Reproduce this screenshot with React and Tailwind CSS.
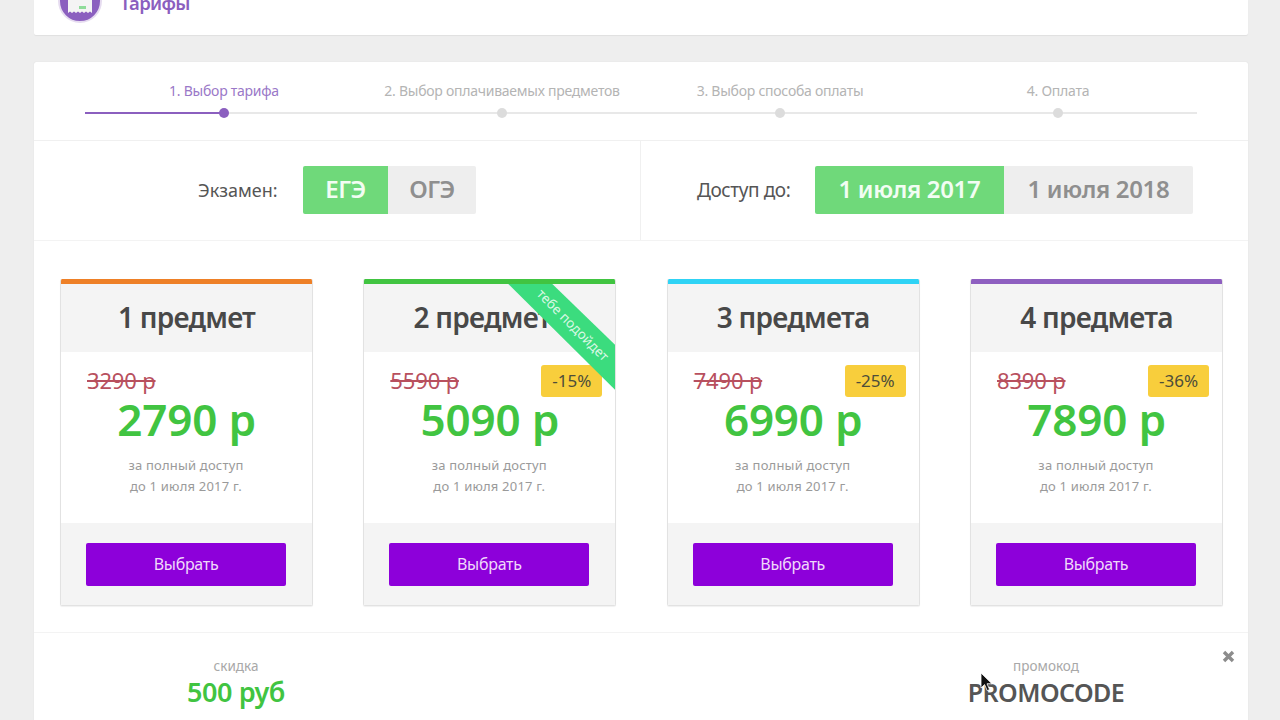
const F = { fontFamily: '"Noto Sans", sans-serif' };

const plans = [
  { n: '1 предмет', old: '3290 р', price: '2790 р', bar: 'bg-[#ee8027]' },
  { n: '2 предмета', old: '5590 р', price: '5090 р', bar: 'bg-[#41c441]', off: '-15%', ribbon: true },
  { n: '3 предмета', old: '7490 р', price: '6990 р', bar: 'bg-[#2fd3f5]', off: '-25%' },
  { n: '4 предмета', old: '8390 р', price: '7890 р', bar: 'bg-[#8e5fc0]', off: '-36%' },
];
const steps = ['1. Выбор тарифа', '2. Выбор оплачиваемых предметов', '3. Выбор способа оплаты', '4. Оплата'];

function Plan({ p }) {
  return (
    <div className="relative w-[253px] h-[327px] flex flex-col rounded-[2px] border-x border-b border-[#e2e2e2] shadow-[0_1px_1px_rgba(0,0,0,0.06)] overflow-hidden">
      <div className={`h-[5px] -mx-px shrink-0 ${p.bar}`} />
      <div className="h-[68px] shrink-0 bg-[#f4f4f4] flex items-center justify-center pb-[2px] text-[28px] font-semibold text-[#484848] tracking-[-0.75px]">{p.n}</div>
      <div className="h-[171px] shrink-0 bg-white pl-[26px] pr-[25px] relative">
        <div className="h-[57px] flex items-start justify-between pt-[12px]">
          <span className="text-[#b8505e] text-[22px] leading-[32px] line-through tracking-[-0.15px]">{p.old}</span>
          {p.off && <span className="w-[61px] h-[32px] mt-[1px] mr-[-12px] rounded-[3px] bg-[#f8ce3c] text-[#4d4d3a] text-[17px] flex items-center justify-center">{p.off}</span>}
        </div>
        <div className="-ml-px text-center text-[#41c441] text-[44px] leading-[50px] font-semibold tracking-[-0.2px] mt-[-15px]">{p.price}</div>
        <div className="-ml-[2px] mt-[11px] text-center text-[#9a9a9a] text-[13px] leading-[21px] tracking-[0.2px]">за полный доступ<br />до 1 июля 2017 г.</div>
      </div>
      <div className="flex-1 bg-[#f4f4f4] pt-[20px] pl-[25px] flex justify-start">
        <button className="w-[200px] h-[43px] pb-[2px] rounded-[2px] bg-[#8d00da] text-[#f0d8fa] text-[16px] tracking-[-0.3px]">Выбрать</button>
      </div>
      {p.ribbon && (
        <div className="absolute top-[5px] right-0 w-[107px] h-[106px] bg-[#3bdc7e] [clip-path:polygon(0_0,44px_0,100%_61px,100%_100%)]">
          <span className="absolute left-[65px] top-[41px] -translate-x-1/2 -translate-y-1/2 rotate-45 whitespace-nowrap text-[13.5px] text-[#d9f8e4]">тебе подойдет</span>
        </div>
      )}
    </div>
  );
}

export default function App() {
  return (
    <div style={F} className="w-[1280px] h-[720px] overflow-hidden bg-[#eeeeee]">
      <div className="ml-[34px] w-[1214px] h-[35px] bg-white shadow-[0_1px_1px_rgba(0,0,0,0.06)] rounded-b-[2px] overflow-hidden flex items-end pl-[24px] pb-[12px] gap-[18px]">
        <div className="w-[44px] h-[44px] shrink-0 rounded-full bg-[#8b5fbf] border-2 border-[#e6dcf0] flex items-start justify-center overflow-hidden">
          <svg width="26" height="36" viewBox="0 0 26 34" className="mt-[1px]">
            <path d="M1 0h24v30l-2-1.5-2 1.5-2-1.5-2 1.5-2-1.5-2 1.5-2-1.5-2 1.5-2-1.5-2 1.5-2-1.5-2 1.5z" fill="#f4f4f4" />
            <rect x="12" y="23" width="7" height="3" fill="#8fdc9a" />
          </svg>
        </div>
        <div className="text-[#8b5fbf] text-[18.5px] leading-[24px] font-semibold mb-[8px] tracking-[-0.7px]">Тарифы</div>
      </div>

      <div className="ml-[34px] w-[1214px] mt-[27px] h-[700px] bg-white shadow-[0_0_1px_rgba(0,0,0,0.15)] rounded-t-[2px]">
        <div className="h-[79px] border-b border-[#f0f0f0] px-[51px] grid grid-cols-4 relative">
          {steps.map((s, i) => (
            <div key={s} className="relative flex flex-col items-center pt-[20px]">
              <span className={`text-[14px] leading-[18px] whitespace-nowrap tracking-[-0.25px] ${i === 0 ? 'text-[#9a78c8]' : 'text-[#b4b4b4]'}`}>{s}</span>
              <div className={`absolute left-0 right-0 top-[50px] h-[2px] ${i === 0 ? 'bg-[linear-gradient(90deg,#8b5fbf_50%,#e8e8e8_50%)]' : 'bg-[#e8e8e8]'}`} />
              <div className={`absolute top-[46px] w-[10px] h-[10px] rounded-full ${i === 0 ? 'bg-[#8b5fbf]' : 'bg-[#dcdcdc]'}`} />
            </div>
          ))}
        </div>

        <div className="h-[100px] border-b border-[#f3f3f3] flex">
          <div className="w-[607px] border-r border-[#f0f0f0] flex items-center pl-[164px] pb-[1px]">
            <span className="w-[105px] text-[18px] text-[#555]">Экзамен:</span>
            <div className="flex h-[48px] text-[24px] font-semibold">
              <div className="w-[85px] pb-[2px] rounded-l-[2px] bg-[#6fd97a] text-[#f2fdf3] flex items-center justify-center tracking-[-0.6px]">ЕГЭ</div>
              <div className="w-[88px] pb-[2px] rounded-r-[2px] bg-[#eeeeee] text-[#8f8f8f] flex items-center justify-center tracking-[-0.6px]">ОГЭ</div>
            </div>
          </div>
          <div className="flex-1 flex items-center pl-[56px] pb-[1px]">
            <span className="w-[118px] text-[19px] text-[#555] tracking-[-0.4px]">Доступ до:</span>
            <div className="flex h-[48px] text-[24px] font-semibold tracking-[-0.35px]">
              <div className="w-[189px] pb-[2px] rounded-l-[2px] bg-[#6fd97a] text-[#f2fdf3] flex items-center justify-center">1 июля 2017</div>
              <div className="w-[189px] pb-[2px] rounded-r-[2px] bg-[#eeeeee] text-[#8f8f8f] flex items-center justify-center">1 июля 2018</div>
            </div>
          </div>
        </div>

        <div className="pl-[26px] pr-[25px] pt-[38px] pb-[26px] flex justify-between border-b border-[#f3f3f3]">
          {plans.map((p) => <Plan key={p.n} p={p} />)}
        </div>

        <div className="relative h-[100px] flex justify-between">
          <div className="ml-[102px] w-[200px] pt-[24px] flex flex-col items-center">
            <span className="text-[13.5px] leading-[18px] text-[#a8a8a8]">скидка</span>
            <span className="text-[#41c441] text-[27px] leading-[34px] font-semibold tracking-[-0.4px]">500 руб</span>
          </div>
          <div className="mr-[102px] w-[200px] pt-[24px] flex flex-col items-center">
            <span className="text-[13.5px] leading-[18px] text-[#a8a8a8]">промокод</span>
            <span className="text-[#555] text-[25px] leading-[34px] font-semibold tracking-[-0.55px]">PROMOCODE</span>
          </div>
          <svg className="absolute left-[1188px] top-[17px]" width="13" height="13" viewBox="0 0 13 13">
            <path d="M2 2l9 9M11 2l-9 9" stroke="#8c8c8c" strokeWidth="3.4" />
          </svg>
          <svg className="absolute left-[946px] top-[39px]" width="14" height="22" viewBox="0 0 14 22">
            <path d="M1 1v15l3.6-3.4 2.6 6 2.4-1-2.6-5.8h5z" fill="#111" stroke="#fff" strokeWidth="0.8" />
          </svg>
        </div>
      </div>
    </div>
  );
}
